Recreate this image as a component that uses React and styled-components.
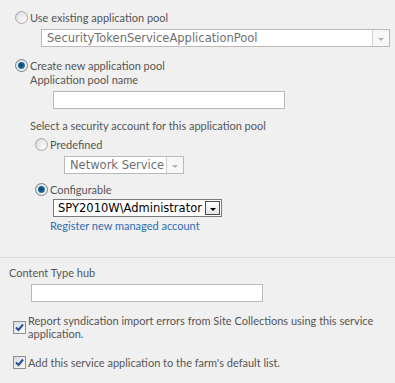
import React from "react";
import styled, { createGlobalStyle, css } from "styled-components";

const GlobalStyle = createGlobalStyle`
  html, body { margin: 0; padding: 0; background: #f0f0f0; }
  body { font-family: Lato, "Liberation Sans", sans-serif; font-size: 11px; color: #555555; }
`;

const Page = styled.div`
  width: 395px;
  height: 383px;
  display: flex;
  flex-direction: column;
  overflow: hidden;
`;

const Section = styled.div`
  display: flex;
  flex-direction: column;
  align-items: flex-start;
  padding-top: ${(p) => p.$pt}px;
  padding-bottom: ${(p) => p.$pb}px;
  border-bottom: ${(p) => (p.$divider ? "1px solid #d9d9d9" : "none")};
`;

const OptionRow = styled.label`
  display: flex;
  align-items: ${(p) => (p.$top ? "flex-start" : "center")};
  gap: 2px;
  margin-left: ${(p) => p.$indent}px;
  margin-top: ${(p) => p.$mt}px;
  line-height: 13px;
  min-height: 13px;
`;

const Text = styled.div`
  margin-left: ${(p) => p.$indent}px;
  margin-top: ${(p) => p.$mt}px;
  line-height: 13px;
  color: ${(p) => (p.$link ? "#2c6db3" : "inherit")};
`;

const Radio = styled.span`
  box-sizing: border-box;
  flex: none;
  width: 13px;
  height: 13px;
  border-radius: 50%;
  border: 1px solid ${(p) => (p.$checked ? "#7b7f84" : "#a9a9a9")};
  background: radial-gradient(circle at 70% 70%, #fafafa 0%, #e6e6e6 60%, #cfcfcf 100%);
  display: inline-flex;
  align-items: center;
  justify-content: center;
  ${(p) =>
    p.$checked &&
    css`
      &::after {
        content: "";
        width: 7px;
        height: 7px;
        border-radius: 50%;
        background: radial-gradient(circle at 45% 45%, #0b3f64 0%, #135f92 45%, #5fb6e3 100%);
      }
    `}
`;

const CheckBox = styled.span`
  box-sizing: border-box;
  flex: none;
  width: 13px;
  height: 13px;
  margin-top: ${(p) => p.$mt}px;
  border: 1px solid #8e8f8f;
  background: linear-gradient(135deg, #d6dbe2, #fbfbfb);
  display: inline-flex;
  align-items: center;
  justify-content: center;
`;

const CheckLabel = styled.span`
  line-height: 13px;
`;

const Box = styled.div`
  box-sizing: border-box;
  width: ${(p) => p.$w}px;
  height: ${(p) => p.$h}px;
  margin-left: ${(p) => p.$indent}px;
  margin-top: ${(p) => p.$mt}px;
  background: #fff;
  border: 1px solid ${(p) => (p.$dark ? "#7a7a7a" : "#b9b9b9")};
  display: flex;
  align-items: center;
`;

const SelectText = styled.span`
  flex: 1;
  padding-left: ${(p) => p.$pl}px;
  font-family: "DejaVu Sans", Verdana, sans-serif;
  font-size: 11.5px;
  color: ${(p) => (p.$dark ? "#000" : "#6f6f6f")};
  white-space: nowrap;
  overflow: hidden;
`;

const DropButton = styled.span`
  box-sizing: border-box;
  flex: none;
  width: ${(p) => (p.$dark ? 15 : 17)}px;
  height: ${(p) => (p.$dark ? 14 : 16)}px;
  margin-right: ${(p) => (p.$dark ? 1 : 0)}px;
  border-left: 1px solid ${(p) => (p.$dark ? "#555" : "#d0d0d0")};
  ${(p) =>
    p.$dark &&
    css`
      border: 1px solid #4a4a4a;
      background: linear-gradient(#ffffff, #e4e4e4);
    `}
  ${(p) =>
    !p.$dark &&
    css`
      background: #f7f7f7;
    `}
  display: flex;
  align-items: center;
  justify-content: center;
  &::after {
    content: "";
    margin-top: 2px;
    border-left: 3px solid transparent;
    border-right: 3px solid transparent;
    border-top: 3px solid ${(p) => (p.$dark ? "#000" : "#b3b3b3")};
  }
`;

const Check = () => (
  <svg width="9" height="9" viewBox="0 0 9 9">
    <path d="M1 4.5 L3.5 7 L8 1.5" fill="none" stroke="#2a4d8f" strokeWidth="2" />
  </svg>
);

function Select({ value, dark, w, indent, mt, pl = 5 }) {
  return (
    <Box $w={w} $h={18} $indent={indent} $mt={mt} $dark={dark}>
      <SelectText $dark={dark} $pl={pl}>{value}</SelectText>
      <DropButton $dark={dark} />
    </Box>
  );
}

export default function App() {
  return (
    <Page>
      <GlobalStyle />
      <Section $pt={11} $pb={25} $divider>
        <OptionRow $indent={15} $mt={0}>
          <Radio />
          <span>Use existing application pool</span>
        </OptionRow>
        <Select value="SecurityTokenServiceApplicationPool" w={349} indent={41} mt={5} />
        <OptionRow $indent={15} $mt={12}>
          <Radio $checked />
          <span>Create new application pool</span>
        </OptionRow>
        <Text $indent={30} $mt={1}>Application pool name</Text>
        <Box $w={232} $h={18} $indent={53} $mt={5} />
        <Text $indent={30} $mt={10}>Select a security account for this application pool</Text>
        <OptionRow $indent={35} $mt={6}>
          <Radio />
          <span>Predefined</span>
        </OptionRow>
        <Select value="Network Service" w={120} indent={64} mt={5} />
        <OptionRow $indent={35} $mt={9}>
          <Radio $checked />
          <span>Configurable</span>
        </OptionRow>
        <Select value="SPY2010W\Administrator" dark w={169} indent={53} mt={3} pl={4} />
        <Text $indent={50} $mt={2} $link>Register new managed account</Text>
      </Section>
      <Section $pt={8} $pb={0}>
        <Text $indent={9} $mt={0}>Content Type hub</Text>
        <Box $w={232} $h={18} $indent={31} $mt={5} />
        <OptionRow $indent={13} $mt={12} $top>
          <CheckBox $mt={7}><Check /></CheckBox>
          <CheckLabel>
            Report syndication import errors from Site Collections using this service
            <br />
            application.
          </CheckLabel>
        </OptionRow>
        <OptionRow $indent={13} $mt={16}>
          <CheckBox $mt={0}><Check /></CheckBox>
          <CheckLabel>Add this service application to the farm's default list.</CheckLabel>
        </OptionRow>
      </Section>
    </Page>
  );
}
